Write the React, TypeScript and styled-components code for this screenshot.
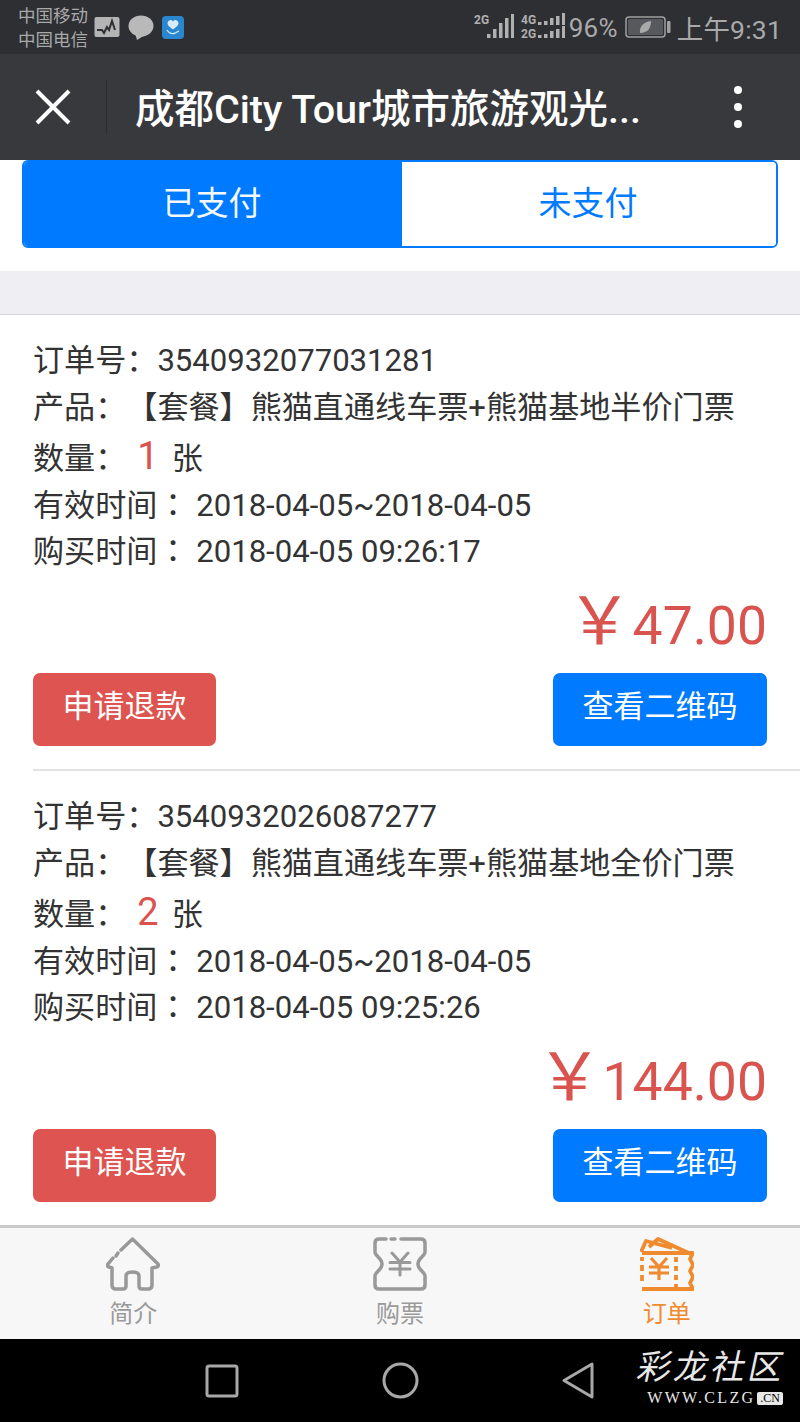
import styled, { createGlobalStyle } from 'styled-components';

const CJK = '"Roboto", "Noto Sans CJK SC", sans-serif';

const GlobalStyle = createGlobalStyle`
  html, body {
    margin: 0;
    padding: 0;
    background: #fff;
  }
  * {
    box-sizing: border-box;
  }
`;

const Page = styled.div`
  width: 800px;
  height: 1422px;
  display: flex;
  flex-direction: column;
  overflow: hidden;
  font-family: ${CJK};
  color: #333;
  text-spacing-trim: space-all;
`;

const StatusBar = styled.div`
  height: 54px;
  flex: none;
  background: #2e2f33;
  display: flex;
  align-items: center;
  padding: 0 18px 0 18px;
  color: #a9a9aa;
`;

const Carriers = styled.div`
  font-size: 17.5px;
  line-height: 24px;
  width: 71px;
  margin-top: 2px;
  white-space: nowrap;
`;

const NotifyIcons = styled.div`
  display: flex;
  align-items: center;
  gap: 8px;
  margin-left: 5px;
  flex: 1;
`;

const StatusRight = styled.div`
  display: flex;
  align-items: center;
`;

const SignalSvg = styled.svg`
  margin-right: 7px;
`;

const Percent = styled.span`
  font-size: 26px;
  margin: 2px 7px 0 4px;
  letter-spacing: 0.2px;
`;

const Clock = styled.span`
  font-size: 26.5px;
  margin: 0 0 0 6px;
  letter-spacing: 0.2px;
`;

const NavBar = styled.div`
  height: 106px;
  flex: none;
  background: #38393d;
  display: flex;
  align-items: center;
  color: #fff;
`;

const CloseBox = styled.div`
  width: 107px;
  height: 54px;
  display: flex;
  align-items: center;
  justify-content: center;
  border-right: 1px solid #2c2d30;
`;

const Title = styled.div`
  margin: 0 0 4px 28px;
  width: 510px;
  font-size: 39.5px;
  font-weight: 500;
  white-space: nowrap;
`;

const MoreDots = styled.div`
  margin-left: 89px;
  display: flex;
  flex-direction: column;
  gap: 9px;
  i {
    display: block;
    width: 8px;
    height: 8px;
    border-radius: 50%;
    background: #fff;
  }
`;

const Main = styled.div`
  flex: 1;
  min-height: 0;
  overflow: hidden;
  background: #fff;
`;

const TabsWrap = styled.div`
  padding: 0 22px 23px;
`;

const Tabs = styled.div`
  height: 88px;
  display: flex;
  border: 2px solid #007aff;
  border-radius: 6px;
  overflow: hidden;
`;

const Tab = styled.div<{ $active?: boolean }>`
  flex: ${(p) => (p.$active ? '0 0 378px' : 1)};
  display: flex;
  align-items: center;
  justify-content: center;
  padding: 0 2px 6px 0;
  font-size: 33px;
  background: ${(p) => (p.$active ? '#007aff' : '#fff')};
  color: ${(p) => (p.$active ? '#f4f9ff' : '#007aff')};
`;

const Gap = styled.div`
  height: 44px;
  background: #eeeef3;
  border-bottom: 1px solid #d4d4d8;
`;

const OrderList = styled.div`
  margin-left: 33px;
`;

const Order = styled.div`
  padding: 23px 33px 23px 0;
  border-bottom: 2px solid #e2e2e4;
  &:last-child {
    border-bottom: none;
  }
`;

const Line = styled.div<{ $tall?: boolean }>`
  height: 46.5px;
  line-height: 46.5px;
  margin-top: ${(p) => (p.$tall ? '5px' : 0)};
  font-size: 31.1px;
  color: #333;
  white-space: pre;
`;

const CenteredColon = styled.span`
  font-family: 'Noto Sans CJK TC', sans-serif;
  line-height: 0;
`;

const Count = styled.span`
  font-size: 38px;
  line-height: 0;
  color: #d9534f;
  margin: 0 13px 0 11px;
`;

const Price = styled.div`
  height: 70px;
  margin-top: 15.5px;
  line-height: 70px;
  text-align: right;
  font-size: 53.5px;
  color: #d9534f;
  span {
    font-size: 66px;
    line-height: 0;
  }
`;

const Actions = styled.div`
  display: flex;
  justify-content: space-between;
  margin: 12px 0 0 0;
`;

const Button = styled.div<{ $kind: 'danger' | 'primary' }>`
  height: 73px;
  width: ${(p) => (p.$kind === 'danger' ? '183px' : '214px')};
  border-radius: 7px;
  display: flex;
  align-items: center;
  justify-content: center;
  padding-bottom: 12px;
  font-size: 31px;
  color: #fff;
  background: ${(p) => (p.$kind === 'danger' ? '#dd5450' : '#007aff')};
`;

const TabBar = styled.div`
  height: 114px;
  flex: none;
  background: #f7f7f7;
  border-top: 3px solid #c9c9c9;
  display: grid;
  grid-template-columns: repeat(3, 1fr);
`;

const TabItem = styled.div<{ $active?: boolean }>`
  display: flex;
  flex-direction: column;
  align-items: center;
  padding-top: 9px;
  font-size: 24px;
  line-height: 30px;
  color: ${(p) => (p.$active ? '#f08a2e' : '#9a9a9a')};
  svg {
    margin-bottom: 8px;
  }
`;

const SystemBar = styled.div`
  height: 83px;
  flex: none;
  background: #000;
  position: relative;
  display: flex;
  align-items: center;
  padding-left: 205px;
`;

const SysIcons = styled.div`
  display: flex;
  align-items: center;
  gap: 143px;
`;

const Watermark = styled.div`
  position: absolute;
  right: 15px;
  top: 9px;
  width: 147px;
  color: #e8e8e8;
  text-align: center;
`;

const WatermarkTitle = styled.div`
  font-size: 34px;
  line-height: 38px;
  font-weight: 400;
  letter-spacing: 3px;
  transform: skewX(-12deg);
  white-space: nowrap;
`;

const WatermarkUrl = styled.div`
  display: flex;
  align-items: center;
  justify-content: flex-end;
  font-family: 'Liberation Serif', serif;
  font-size: 16px;
  line-height: 16px;
  letter-spacing: 2.3px;
  gap: 2px;
  margin-top: 4px;
  padding-right: 2px;
  b {
    background: #e8e8e8;
    color: #000;
    font-size: 12px;
    line-height: 13px;
    letter-spacing: 0;
    padding: 0 3px;
    border-radius: 2px;
    font-weight: 400;
  }
`;

function PulseIcon() {
  return (
    <svg width="26" height="22" viewBox="0 0 26 22">
      <rect x="0.5" y="1" width="25" height="20" rx="2" fill="#b4b4b4" />
      <path d="M3 14h5l2 3 3-6 2 3 3-9 3 9" fill="none" stroke="#2e2f33" strokeWidth="2" />
    </svg>
  );
}

function BubbleIcon() {
  return (
    <svg width="26" height="25" viewBox="0 0 26 25">
      <ellipse cx="13" cy="11" rx="12.500" ry="10.500" fill="#b9b9b9" />
      <path d="M7 18l2 7 8-5z" fill="#b9b9b9" />
    </svg>
  );
}

function HeartAppIcon() {
  return (
    <svg width="22" height="23" viewBox="0 0 22 23">
      <rect width="22" height="23" rx="4" fill="#2a86cf" />
      <path d="M11 13.500C7 10.500 5.500 9 5.500 7a3 3 0 0 1 5.500-1.500A3 3 0 0 1 16.500 7c0 2-1.500 3.500-5.500 6.500z" fill="#d6ecfa" />
      <path d="M5 14c2 3 4 4 7 3.500l5-2.500" fill="none" stroke="#d6ecfa" strokeWidth="1.300" />
    </svg>
  );
}

function Signal({ bars }: { bars: number[] }) {
  return (
    <>
      {bars.map((h, i) => (
        <rect key={i} x={i * 6} y={26 - h} width="3.500" height={h} fill="#b0b0b0" />
      ))}
    </>
  );
}

const signalLabel = {
  fontSize: 12,
  fontWeight: 700,
  fill: '#b0b0b0',
  fontFamily: 'Roboto, sans-serif',
};

function SignalOne() {
  return (
    <SignalSvg width="40" height="28" viewBox="0 0 40 28">
      <text x="0" y="11" {...signalLabel}>2G</text>
      <g transform="translate(13 -1)">
        <Signal bars={[4, 9, 15, 20, 24]} />
      </g>
    </SignalSvg>
  );
}

function SignalTwo() {
  return (
    <svg width="44" height="28" viewBox="0 0 44 28">
      <text x="0" y="11" {...signalLabel}>4G</text>
      <text x="0" y="25" {...signalLabel}>2G</text>
      <g transform="translate(17 -14)">
        <Signal bars={[3, 4, 7, 9, 12]} />
      </g>
      <g transform="translate(17 -1)">
        <Signal bars={[3, 4, 7, 9, 12]} />
      </g>
    </svg>
  );
}

function BatteryIcon() {
  return (
    <svg width="46" height="22" viewBox="0 0 46 22">
      <rect x="1" y="1" width="39" height="20" rx="3" fill="none" stroke="#a0a0a0" strokeWidth="1.500" />
      <rect x="3" y="3" width="35" height="16" rx="1.500" fill="#58595c" />
      <path d="M15 17c-1-7 4-11 11-12 0 7-3 12-11 12z" fill="#a9a9aa" />
      <rect x="42" y="5" width="3.500" height="12" rx="1" fill="#a0a0a0" />
    </svg>
  );
}

function CloseIcon() {
  return (
    <svg width="36" height="36" viewBox="0 0 36 36">
      <path d="M2 2l32 32M34 2L2 34" stroke="#fff" strokeWidth="4" />
    </svg>
  );
}

function HomeIcon() {
  return (
    <svg width="54" height="54" viewBox="0 0 54 54" fill="none" stroke="#999" strokeWidth="3.500" strokeLinejoin="round" strokeLinecap="round">
      <path d="M15 13L26.500 2 52 27q1 2-1 3l-5 1v17q0 4-4 4h-6q-3 0-3-3V39q0-4-6.500-4T20 39v10q0 3-3 3h-7q-4 0-4-4V31l-3-1q-3-1-1-3l5-6" />
      <path d="M10 19l2-3" />
    </svg>
  );
}

function TicketIcon() {
  return (
    <svg width="54" height="54" viewBox="0 0 54 54" fill="none" stroke="#999" strokeWidth="3.500" strokeLinejoin="round" strokeLinecap="round">
      <path d="M13 2H6Q2 2 2 6V15C2 19 9 21 9 27S2 35 2 39V48Q2 52 6 52H48Q52 52 52 48V39C52 35 45 33 45 27S52 19 52 15V6Q52 2 48 2H28" />
      <path d="M18 2H22" />
      <path d="M19 16l8 9 8-9M17 25.500h20M17 32h20M27 25v13" strokeWidth="3" />
    </svg>
  );
}

function OrdersIcon() {
  return (
    <svg width="54" height="54" viewBox="0 0 54 54" fill="none" stroke="#f08a2e" strokeWidth="3.800" strokeLinejoin="round">
      <path d="M1 15L6 4l26 7M9 10L18 2l33 15" />
      <path d="M2 16H53L50 22 53 28 50 34 53 40 50 46 53 52H2" />
      <path d="M2 20v4M2 28v6M2 38v6" />
      <path d="M36 20v5M36 29v5M36 38v5M36 47v3" />
      <path d="M11 21l8 9 8-9M9 30h20M9 36h20M19 30v13" strokeWidth="3.200" />
    </svg>
  );
}

interface OrderData {
  no: string;
  product: string;
  count: number;
  valid: string;
  bought: string;
  price: string;
}

const orders: OrderData[] = [
  {
    no: '3540932077031281',
    product: '【套餐】熊猫直通线车票+熊猫基地半价门票',
    count: 1,
    valid: '2018-04-05~2018-04-05',
    bought: '2018-04-05 09:26:17',
    price: '47.00',
  },
  {
    no: '3540932026087277',
    product: '【套餐】熊猫直通线车票+熊猫基地全价门票',
    count: 2,
    valid: '2018-04-05~2018-04-05',
    bought: '2018-04-05 09:25:26',
    price: '144.00',
  },
];

function App() {
  return (
    <Page>
      <GlobalStyle />
      <StatusBar>
        <Carriers>
          中国移动
          <br />
          中国电信
        </Carriers>
        <NotifyIcons>
          <PulseIcon />
          <BubbleIcon />
          <HeartAppIcon />
        </NotifyIcons>
        <StatusRight>
          <SignalOne />
          <SignalTwo />
          <Percent>96%</Percent>
          <BatteryIcon />
          <Clock>上午9:31</Clock>
        </StatusRight>
      </StatusBar>
      <NavBar>
        <CloseBox>
          <CloseIcon />
        </CloseBox>
        <Title>成都City Tour城市旅游观光...</Title>
        <MoreDots>
          <i />
          <i />
          <i />
        </MoreDots>
      </NavBar>
      <Main>
        <TabsWrap>
          <Tabs>
            <Tab $active>已支付</Tab>
            <Tab>未支付</Tab>
          </Tabs>
        </TabsWrap>
        <Gap />
        <OrderList>
          {orders.map((o) => (
            <Order key={o.no}>
              <Line>订单号：{o.no}</Line>
              <Line>产品：{o.product}</Line>
              <Line $tall>
                数量：<Count>{o.count}</Count>张
              </Line>
              <Line>
                有效时间<CenteredColon>：</CenteredColon> {o.valid}
              </Line>
              <Line>
                购买时间<CenteredColon>：</CenteredColon> {o.bought}
              </Line>
              <Price>
                <span>￥</span>
                {o.price}
              </Price>
              <Actions>
                <Button $kind="danger">申请退款</Button>
                <Button $kind="primary">查看二维码</Button>
              </Actions>
            </Order>
          ))}
        </OrderList>
      </Main>
      <TabBar>
        <TabItem>
          <HomeIcon />
          简介
        </TabItem>
        <TabItem>
          <TicketIcon />
          购票
        </TabItem>
        <TabItem $active>
          <OrdersIcon />
          订单
        </TabItem>
      </TabBar>
      <SystemBar>
        <SysIcons>
          <svg width="34" height="34" viewBox="0 0 34 34">
            <rect x="2" y="2" width="30" height="30" rx="2" fill="none" stroke="#a8a8a8" strokeWidth="3" />
          </svg>
          <svg width="37" height="37" viewBox="0 0 37 37">
            <circle cx="18.500" cy="18.500" r="16.500" fill="none" stroke="#a8a8a8" strokeWidth="3" />
          </svg>
          <svg width="33" height="37" viewBox="0 0 33 37">
            <path d="M30 2v33L2 18.500z" fill="none" stroke="#a8a8a8" strokeWidth="3" strokeLinejoin="round" />
          </svg>
        </SysIcons>
        <Watermark>
          <WatermarkTitle>彩龙社区</WatermarkTitle>
          <WatermarkUrl>
            WWW.CLZG<b>.CN</b>
          </WatermarkUrl>
        </Watermark>
      </SystemBar>
    </Page>
  );
}

export default App;
